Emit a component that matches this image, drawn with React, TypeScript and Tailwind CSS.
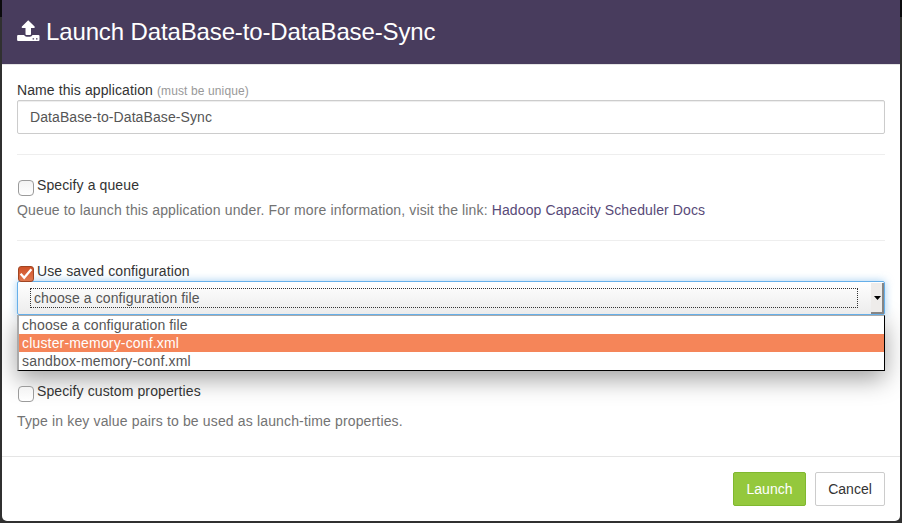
import React from "react";

function UploadIcon() {
  return (
    <svg className="mr-1.5 mb-0.5 h-6 w-[23px] shrink-0" viewBox="0 0 23 24" fill="#fff">
      <path d="M11.2 1.2 17.6 7.6Q18.4 9 17 9H14v6.2q0 .8-.8.8H9.3q-.8 0-.8-.8V9h-3Q4 9 4.9 7.6Z" />
      <path
        fillRule="evenodd"
        d="M1.2 16h5.9q.8 1.8 2.6 1.8h3.2q1.8 0 2.6-1.8h5.9q1.1 0 1.1 1.1v3.8q0 1.1-1.1 1.1H1.2Q.1 22 .1 20.9v-3.8Q.1 16 1.2 16Zm14.4 3.2v1.4h1.5v-1.4Zm3.4 0v1.4h1.5v-1.4Z"
      />
    </svg>
  );
}

function Check({ checked = false }: { checked?: boolean }) {
  return (
    <span
      className={
        checked
          ? "relative z-20 mt-[5px] ml-px block h-4 w-4 shrink-0 rounded-[3px] border border-[#a04522] bg-linear-to-b from-[#cf5127] to-[#e0784f]"
          : "mt-[5px] ml-px block h-4 w-4 shrink-0 rounded-[4px] border border-[#9b9b9b] bg-linear-to-b from-[#f3f3f3] to-white"
      }
    >
      {checked && (
        <svg viewBox="0 0 14 14" className="block h-3.5 w-3.5" fill="none" stroke="#fff" strokeWidth="2.3">
          <path d="M1.6 6.8 5.2 10.8 12.4 2.2" />
        </svg>
      )}
    </span>
  );
}

function CheckRow({ label, checked }: { label: string; checked?: boolean }) {
  return (
    <div className="flex h-5 text-[#333]">
      <Check checked={checked} />
      <span className="ml-[3px] tracking-[0.11px]">{label}</span>
    </div>
  );
}

export default function App() {
  return (
    <div
      className="h-[523px] w-[902px] overflow-hidden bg-[#2d2d2f] bg-linear-to-b from-[#0b0b0d] from-[17px] to-[#303030] to-[17px] px-0.5 text-[14px] leading-5 whitespace-nowrap"
      style={{ fontFamily: '"Liberation Sans", Arial, sans-serif' }}
    >
      <div className="flex h-[521px] flex-col overflow-hidden rounded-b-[5px] bg-white">
        <header className="flex h-[65px] shrink-0 items-center border-b border-[#e5e5e5] bg-[#483c5d] pl-[15px] text-[24px] text-white">
          <UploadIcon />
          <h1 className="leading-[26px] tracking-[-0.13px]">Launch DataBase-to-DataBase-Sync</h1>
        </header>

        <main className="flex h-[391px] shrink-0 flex-col px-[15px] pt-[15px]">
          <div className="h-5 tracking-[0.1px] text-[#333]">
            Name this application <span className="text-[12px] tracking-[0.12px] text-[#999]">(must be unique)</span>
          </div>
          <div className="h-[34px] rounded-[2px] border border-[#ccc] px-3 py-1.5 tracking-[0.09px] text-[#555] shadow-[inset_0_1px_1px_rgba(0,0,0,0.075)]">
            DataBase-to-DataBase-Sync
          </div>
          <hr className="my-5 border-[#eee]" />

          <CheckRow label="Specify a queue" />
          <p className="mt-[5px] tracking-[0.14px] text-[#737373]">
            Queue to launch this application under. For more information, visit the link:{" "}
            <a className="tracking-[0.11px] text-[#584a78]">Hadoop Capacity Scheduler Docs</a>
          </p>
          <hr className="my-5 border-[#eee]" />

          <CheckRow label="Use saved configuration" checked />
          <div className="relative z-0 h-[34px]">
            <div className="relative z-10 flex h-[34px] rounded-[2px] border border-[#66afe9] bg-linear-to-b from-white to-[#ececec] shadow-[0_0_8px_rgba(102,175,233,0.6)]">
              <div className="mt-1.5 ml-3 h-5 w-[828px] border border-dotted border-[#333] pl-[3px] leading-[18px] tracking-[0.11px] text-[#555]">
                choose a configuration file
              </div>
              <div className="mt-px ml-auto flex h-[31px] w-[13px] items-center justify-end border-r-2 border-b-2 border-[#858585] bg-[#eeecea] pr-px">
                <svg viewBox="0 0 7 4" className="h-1 w-[7px]">
                  <path d="M0 0h7L3.5 4Z" fill="#000" />
                </svg>
              </div>
            </div>
            <div className="absolute top-[34px] left-0 h-14 w-[868px] shadow-[0_8px_24px_rgba(0,0,0,0.38)]" />
            <ul className="absolute top-[34px] left-0 z-20 w-[868px] border border-l-2 border-t-[#aaa] border-r-black border-b-black border-l-[#aaa] bg-white leading-[18px] text-[#555]">
              <li className="pl-[3px] tracking-[0.11px]">choose a configuration file</li>
              <li className="bg-[#f58559] pl-[3px] tracking-[0.17px] text-white">cluster-memory-conf.xml</li>
              <li className="pl-[3px] tracking-[0.17px]">sandbox-memory-conf.xml</li>
            </ul>
          </div>

          <div className="relative mt-[66px]">
            <CheckRow label="Specify custom properties" />
            <p className="mt-2.5 tracking-[0.15px] text-[#737373]">Type in key value pairs to be used as launch-time properties.</p>
          </div>
        </main>

        <footer className="flex grow justify-end gap-[9px] border-t border-[#e5e5e5] pt-[15px] pr-[15px]">
          <button className="h-[34px] w-[73px] rounded-[2px] border border-[#80b82f] bg-[#94c83d] text-white">Launch</button>
          <button className="h-[34px] w-[70px] rounded-[2px] border border-[#ccc] bg-white text-[#333]">Cancel</button>
        </footer>
      </div>
    </div>
  );
}
